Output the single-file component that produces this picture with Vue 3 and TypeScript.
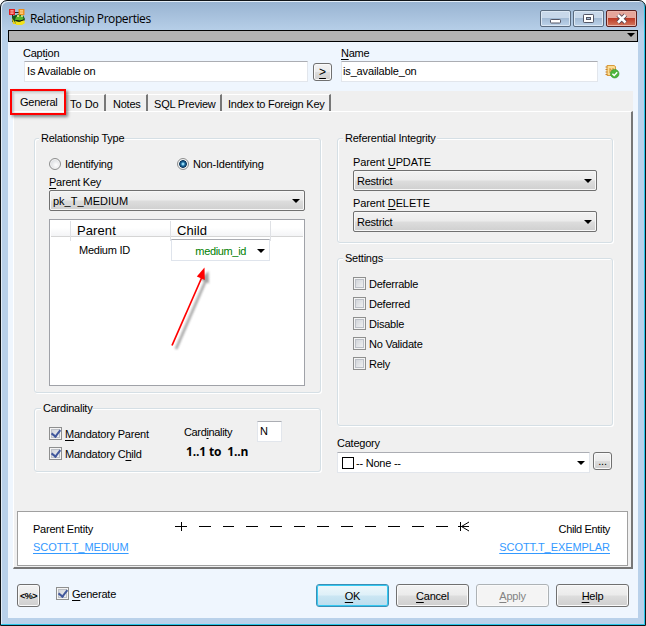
<script setup lang="ts">
import { ref } from 'vue'

interface Option {
  label: string
  checked: boolean
}

const tabs: { name: string; cls: string }[] = [
  { name: 'To Do', cls: 'todo' },
  { name: 'Notes', cls: 'notes' },
  { name: 'SQL Preview', cls: 'sql' },
  { name: 'Index to Foreign Key', cls: 'fk' },
]

const rules = [
  { key: 'U', rest: 'PDATE', value: 'Restrict' },
  { key: 'D', rest: 'ELETE', value: 'Restrict' },
]

const settings = ref<Option[]>([
  { label: 'Deferrable', checked: false },
  { label: 'Deferred', checked: false },
  { label: 'Disable', checked: false },
  { label: 'No Validate', checked: false },
  { label: 'Rely', checked: false },
])

const actions = [
  { key: 'O', rest: 'K', cls: 'primary' },
  { key: 'C', rest: 'ancel', cls: '' },
  { key: 'A', rest: 'pply', cls: 'off' },
  { key: 'H', rest: 'elp', cls: '' },
]

const dashes = [200, 223.5, 247, 271, 294.5, 318, 342, 365.5, 389, 413, 437]
</script>

<template>
  <div class="window">
    <header class="titlebar">
      <svg class="app-icon" width="17" height="17" viewBox="0 0 17 17">
        <path d="M3.500 5v8M6 3.500h4" stroke="#222" fill="none" />
        <path d="M3 7l4-1 3-1 4 1 2 4-2 5H5l-2-3z" fill="#14571b" />
        <path d="M7 8l3-2 4 2 1 3-4 1-5-1z" fill="#56b42c" />
        <path d="M6 12l4 1 5-2 1 3-3 2H7z" fill="#f2e21c" />
        <path d="M3 9l2 3 2 3H4z" fill="#e9cf20" />
        <circle cx="9" cy="7" r="1" fill="#fff59a" /><circle cx="13" cy="7" r="1" fill="#fff59a" />
        <path d="M7 11.500q4 1.500 8-.8" stroke="#111" fill="none" />
        <rect x=".7" y=".7" width="4.600" height="4.600" fill="#ffd9d0" stroke="#e01818" stroke-width="1.300" />
        <path d="M1 3h4" stroke="#e01818" />
        <rect x="10.200" y=".7" width="4.600" height="4.600" fill="#ffe9b0" stroke="#f08a10" stroke-width="1.300" />
        <path d="M10 3h5" stroke="#f08a10" />
      </svg>
      <span class="title">Relationship Properties</span>
      <div class="win-buttons">
        <button class="wb"><svg width="29" height="16" viewBox="0 0 29 16"><rect x="9.500" y="8.500" width="10" height="3.500" rx=".7" fill="#fff" stroke="#535666" /></svg></button>
        <button class="wb"><svg width="29" height="16" viewBox="0 0 29 16"><rect x="9.500" y="3.500" width="10" height="8" rx=".7" fill="#fff" stroke="#535666" /><rect x="12.500" y="6.500" width="4" height="2" fill="#a6bcd5" stroke="#535666" /></svg></button>
        <button class="wb close"><svg width="29" height="16" viewBox="0 0 29 16"><path d="M11 4l7.500 7.500M18.500 4L11 11.500" stroke="#554450" stroke-width="4.400" /><path d="M11 4l7.500 7.500M18.500 4L11 11.500" stroke="#fff" stroke-width="2.500" /></svg></button>
      </div>
    </header>

    <main class="client">
      <div class="strip"><i class="tri"></i></div>

      <section class="names">
        <div class="field caption">
          <label>Capt<u>i</u>on</label>
          <div class="input">Is Available on</div>
        </div>
        <button class="btn more"><u>&gt;</u></button>
        <div class="field name">
          <label><u>N</u>ame</label>
          <div class="input ident">is_available_on</div>
        </div>
        <svg class="script-icon" width="15" height="15" viewBox="0 0 15 15">
          <path d="M2 1.500h7l1.500 1v9H2z" fill="#fbdc91" stroke="#d99b3c" />
          <path d="M.5 3h2M.5 5.500h2M.5 8h2M.5 10.500h2" stroke="#c9852e" />
          <path d="M5 9V4.500L8 8V4" stroke="#c98b35" fill="none" />
          <circle cx="9.700" cy="9.700" r="4.300" fill="#4cb53c" stroke="#35932c" stroke-width=".6" />
          <path d="M7.400 9.800l1.800 1.700 3-3.300" stroke="#fff" stroke-width="1.500" fill="none" />
        </svg>
      </section>

      <nav class="tabs">
        <div class="tab general"><span>General</span></div>
        <div v-for="t in tabs" :key="t.name" class="tab" :class="t.cls"><span>{{ t.name }}</span></div>
      </nav>

      <section class="page">
        <div class="columns">
          <div class="left">
            <fieldset class="group rel">
              <div class="legend"><span>Relationship Type</span></div>
              <div class="radios">
                <label class="check"><i class="radio"></i><span>Identifying</span></label>
                <label class="check"><i class="radio on"></i><span>Non-Identifying</span></label>
              </div>
              <div class="lab"><u>P</u>arent Key</div>
              <div class="select"><span class="caps">pk_T_MEDIUM</span><i class="tri"></i></div>
              <div class="grid">
                <div class="thead"><b></b><b>Parent</b><b>Child</b><b></b></div>
                <div class="trow">
                  <span class="pcol">Medium ID</span>
                  <div class="ccol"><span>medium_id</span><i class="tri"></i></div>
                </div>
              </div>
            </fieldset>
            <fieldset class="group card">
              <div class="legend"><span>Cardinality</span></div>
              <div class="card-body">
                <div class="checks">
                  <label class="check"><i class="box on"></i><span><u>M</u>andatory Parent</span></label>
                  <label class="check"><i class="box on"></i><span>Mandatory C<u>h</u>ild</span></label>
                </div>
                <div class="card-info">
                  <div class="card-row"><span>Card<u>i</u>nality</span><div class="input n">N</div></div>
                  <strong>1..1 to&nbsp; 1..n</strong>
                </div>
              </div>
            </fieldset>
          </div>

          <div class="right">
            <fieldset class="group ref">
              <div class="legend"><span>Referential Integrity</span></div>
              <div v-for="r in rules" :key="r.key" class="rule">
                <div class="lab">Parent <u>{{ r.key }}</u>{{ r.rest }}</div>
                <div class="select"><span>{{ r.value }}</span><i class="tri"></i></div>
              </div>
            </fieldset>
            <fieldset class="group set">
              <div class="legend"><span>Settings</span></div>
              <div class="checks">
                <label v-for="s in settings" :key="s.label" class="check" @click="s.checked = !s.checked">
                  <i class="box" :class="{ on: s.checked }"></i><span>{{ s.label }}</span>
                </label>
              </div>
            </fieldset>
            <div class="lab cat">Category</div>
            <div class="cat-row">
              <div class="combo"><i class="swatch"></i><span>-- None --</span><i class="tri"></i></div>
              <button class="btn dots">...</button>
            </div>
          </div>
        </div>

        <div class="entities">
          <div class="entity">
            <span>Parent Entity</span>
            <a>SCOTT.T_MEDIUM</a>
          </div>
          <svg class="link-line" width="300" height="14" viewBox="174 519 300 14" shape-rendering="crispEdges">
            <path d="M176 526.500h12M182.500 522v9" stroke="#000" fill="none" />
            <path v-for="d in dashes" :key="d" :d="`M${d} 526.500h11.500`" stroke="#000" />
            <path d="M459 526.500h11M461.500 522v9" stroke="#000" fill="none" />
            <path d="M470 522l-7.500 4.500L470 531" stroke="#000" fill="none" shape-rendering="auto" />
          </svg>
          <div class="entity child">
            <span>Child Entity</span>
            <a>SCOTT.T_EXEMPLAR</a>
          </div>
        </div>
      </section>

      <footer class="footer">
        <button class="btn code">&lt;%&gt;</button>
        <label class="check gen"><i class="box on"></i><span><u>G</u>enerate</span></label>
        <div class="actions">
          <button v-for="a in actions" :key="a.key" class="btn action" :class="a.cls"><span><u>{{ a.key }}</u>{{ a.rest }}</span></button>
        </div>
      </footer>
    </main>

    <div class="callout"></div>
    <svg class="arrow" width="50" height="90" viewBox="165 262 50 90">
      <defs>
        <filter id="soft" x="-30%" y="-30%" width="160%" height="160%"><feGaussianBlur stdDeviation="1.300" /></filter>
      </defs>
      <g transform="translate(4 3)" opacity=".45" filter="url(#soft)">
        <path d="M172 346L202 277" stroke="#333" stroke-width="2.500" />
        <path d="M204.500 268l-8 8.500 8.500 4z" fill="#333" />
      </g>
      <path d="M172 345.500L202 277" stroke="#f00" stroke-width="1.700" />
      <path d="M204.500 267.500l-7.700 9 8 3.500z" fill="#f00" />
    </svg>
  </div>
</template>

<style>
body {
  margin: 0;
  overflow: hidden;
}
</style>

<style scoped>
* {
  box-sizing: border-box;
}
.window {
  position: relative;
  width: 646px;
  height: 626px;
  padding: 1px 7px 7px 7px;
  border: 1px solid #101418;
  border-radius: 7px 7px 0 0;
  background: linear-gradient(#98b3d1 0, #b9d1ea 32px, #b9d1ea 110px, #b9d1ea);
  box-shadow: inset -1px -1px 0 #27c5e8, inset 1px 1px 0 #e3edf7;
  font-family: 'Liberation Sans', Arial, sans-serif;
  font-size: 11px;
  letter-spacing: -0.23px;
  line-height: 14px;
  color: #000;
}
u {
  text-decoration: underline;
  text-underline-offset: 2px;
  text-decoration-thickness: 1px;
}
button {
  padding: 0;
  font: inherit;
  letter-spacing: inherit;
}
i {
  flex: none;
  display: block;
}
.caps {
  letter-spacing: 0;
}
.titlebar {
  display: flex;
  height: 28px;
  padding: 0 1px 0 1px;
}
.app-icon {
  margin-top: 7px;
}
.title {
  margin: 10px 0 0 4px;
  font-family: 'Open Sans', 'Noto Sans', sans-serif;
  font-size: 12px;
  letter-spacing: -0.42px;
}
.win-buttons {
  display: flex;
  gap: 2px;
  margin: 8px 0 0 auto;
}
.wb {
  width: 31px;
  height: 17px;
  border: 1px solid #5a6b7f;
  border-radius: 2px;
  background: linear-gradient(#c8d8ea 0 45%, #a3bbd5 50%, #bdd3ea);
  box-shadow: inset 0 0 0 1px #dce8f4;
}
.wb svg {
  display: block;
}
.close {
  border-color: #5b2020;
  background: linear-gradient(#e5a69b 0 45%, #bd3a25 50%, #d37960);
  box-shadow: inset 0 0 0 1px #eab5aa;
}
.client {
  display: flex;
  flex-direction: column;
  height: 588px;
  width: 630px;
  background: #eff6fe;
}
.strip {
  display: flex;
  justify-content: flex-end;
  height: 12px;
  padding: 2px 2px;
  border: 1px solid #000;
  background: #b2b2b2;
}
.tri {
  width: 0;
  height: 0;
  border: 4px solid transparent;
  border-top-color: #000;
  border-bottom: 0;
}
.names {
  display: flex;
  height: 49px;
  padding: 4px 0 0 16px;
}
.field label {
  display: block;
  height: 15px;
}
.caption {
  width: 284px;
}
.caption label {
  margin-left: -1px;
}
.name {
  width: 257px;
  margin-left: 9px;
}
.input {
  height: 21px;
  padding: 2px 2px;
  border: 1px solid #e2e6ec;
  border-top-color: #abadb3;
  background: #fff;
}
.ident {
  padding-left: 1px;
  letter-spacing: -0.15px;
}
.caption .input {
  letter-spacing: -0.15px;
}
.btn {
  border: 1px solid #707070;
  border-radius: 3px;
  background: linear-gradient(#f3f3f3 0, #ebebeb 48%, #dddddd 52%, #cfcfcf);
  box-shadow: inset 0 0 0 1px #fafafa;
  color: #000;
}
.more {
  width: 19px;
  height: 18px;
  margin: 17px 0 0 5px;
  font-size: 12px;
}
.script-icon {
  margin: 18px 0 0 7px;
}
.tabs {
  display: flex;
  width: 619px;
  height: 20px;
  margin-left: 6px;
  padding-top: 3px;
  background: #efefef;
}
.tab {
  height: 17px;
  padding-top: 2px;
  border-top: 1px solid #fff;
  border-right: 2px solid #777;
  white-space: nowrap;
}
.tab span {
  display: block;
}
.general {
  width: 52px;
  height: 20px;
  margin-top: -2px;
  padding: 2px 0 0 6px;
  border-right: 0;
}
.todo { width: 40px; padding-left: 4px; letter-spacing: 0; }
.notes { width: 42px; padding-left: 7px; }
.sql { width: 74px; padding-left: 6px; letter-spacing: -0.2px; }
.fk { width: 109px; padding-left: 6px; letter-spacing: -0.25px; }
.page {
  width: 620px;
  height: 458px;
  margin-left: 5px;
  padding: 0 3px;
  border: 1px solid #fff;
  border-right: 2px solid #777;
  border-bottom: 2px solid #777;
  background: #f0f0f0;
}
.columns {
  display: flex;
  gap: 16px;
  height: 399px;
  padding: 26px 0 0 17px;
}
.left {
  width: 287px;
}
.right {
  width: 276px;
}
.group {
  min-width: 0;
  margin: 0;
  padding: 0 15px;
  border: 1px solid #d5dfe5;
  border-radius: 3px;
  box-shadow: inset 1px 1px 0 #fff, 1px 1px 0 #fff;
}
.left .group {
  padding: 0 14px;
}
.legend {
  height: 14px;
  margin: -8px 0 0 -10px;
}
.legend span {
  display: inline-block;
  padding: 0 1px 0 2px;
  background: #f0f0f0;
}
.rel {
  height: 255px;
}
.radios {
  display: flex;
  padding-top: 12px;
}
.radios .check {
  width: 128px;
}
.check {
  display: flex;
  align-items: center;
  gap: 4px;
  height: 14px;
  white-space: nowrap;
}
.radio {
  width: 12px;
  height: 12px;
  border: 1px solid #8e8f8f;
  border-radius: 50%;
  background: radial-gradient(circle at 60% 60%, #fff, #c9cdd2);
  box-shadow: inset 0 0 0 1px #f4f4f4;
}
.radio.on {
  background: radial-gradient(circle at 50% 50%, #9ce3fa 0 0.600px, #1c6aa0 2px, #0b3558 3.600px, #e9edf0 4.300px);
}
.lab {
  height: 14px;
}
.rel .lab {
  margin-top: 4px;
}
.select {
  display: flex;
  align-items: center;
  justify-content: space-between;
  height: 21px;
  padding: 1px 4px 0 3px;
  border: 1px solid #707070;
  border-radius: 2px;
  background: linear-gradient(#f2f2f2 0, #ebebeb 48%, #dddddd 52%, #cfcfcf);
  box-shadow: inset 0 0 0 1px #f7f7f7;
}
.rel .select {
  width: 256px;
  margin-top: 1px;
}
.grid {
  width: 256px;
  height: 167px;
  margin-top: 8px;
  padding: 1px;
  border: 1px solid #a0a2a8;
  background: #fff;
}
.thead {
  display: grid;
  grid-template-columns: 20px 100px 100px 1fr;
  height: 16px;
  border-bottom: 1px solid #d5d5d5;
  background: linear-gradient(#fff 45%, #f3f4f6);
}
.thead b {
  padding-left: 6px;
  border-right: 1px solid #dfe1e5;
  font-weight: 400;
  font-size: 13px;
  letter-spacing: 0.1px;
  line-height: 20px;
}
.thead b:last-child {
  border: 0;
}
.trow {
  display: flex;
  padding-top: 2px;
}
.pcol {
  width: 120px;
  padding: 4px 0 0 28px;
  letter-spacing: -0.25px;
}
.ccol {
  display: flex;
  align-items: center;
  justify-content: flex-end;
  gap: 11px;
  width: 99px;
  height: 22px;
  padding: 1px 4px 0 0;
  border: 1px solid #dfe4ec;
  border-top-color: #abadb3;
  color: #008000;
  letter-spacing: -0.35px;
}
.card {
  height: 64px;
  margin-top: 15px;
}
.card .legend {
  margin-left: -8px;
}
.card-body {
  display: flex;
}
.checks {
  display: grid;
  gap: 6px;
}
.card .checks {
  width: 135px;
  padding-top: 12px;
  align-content: start;
}
.box {
  width: 13px;
  height: 13px;
  border: 1px solid #8e8f8f;
  background: linear-gradient(135deg, #cbcfd5, #f6f6f6);
  box-shadow: inset 0 0 0 1px #f4f4f4, inset 0 0 0 2px #bcc0c7;
}
.check .box {
  margin: -1px -1px 0 0;
}
.box.on::after {
  content: '';
  display: block;
  width: 4px;
  height: 7px;
  margin: 0 0 0 3px;
  border: solid #42589c;
  border-width: 0 2px 2px 0;
  transform: rotate(38deg);
}
.card-row {
  display: flex;
  height: 21px;
  margin-top: 6px;
}
.card-row > span {
  width: 73px;
  padding-top: 4px;
  letter-spacing: -0.35px;
}
.n {
  width: 25px;
  height: 21px;
}
.card-info strong {
  display: block;
  margin: 3px 0 0 2px;
  font-family: 'Open Sans', sans-serif;
  font-size: 12px;
  letter-spacing: -0.15px;
}
.ref {
  height: 105px;
  padding-top: 0;
}
.ref .legend,
.set .legend {
  margin-left: -10px;
}
.rule {
  padding-top: 5px;
}
.legend + .rule {
  padding-top: 10px;
}
.rule .lab {
  letter-spacing: -0.1px;
}
.rule .select {
  width: 244px;
  margin-top: 1px;
}
.set {
  height: 168px;
  margin-top: 15px;
}
.set .checks {
  padding-top: 12px;
}
.cat {
  margin: 10px 0 0;
}
.cat-row {
  display: flex;
  gap: 3px;
  padding-top: 2px;
}
.combo {
  display: flex;
  align-items: center;
  width: 253px;
  height: 21px;
  padding: 1px 4px 0;
  border: 1px solid #e2e6ec;
  border-top-color: #abadb3;
  background: #fff;
}
.combo .tri {
  margin-left: auto;
}
.swatch {
  width: 12px;
  height: 12px;
  margin: -1px 2px 0 0;
  border: 1px solid #000;
}
.dots {
  width: 19px;
  height: 18px;
  line-height: 12px;
}
.entities {
  display: flex;
  width: 611px;
  height: 55px;
  padding: 0 17px 0 15px;
  border: 1px solid #a0a0a0;
  background: #fff;
}
.entity {
  display: flex;
  flex-direction: column;
  gap: 4px;
  width: 139px;
  padding-top: 10px;
}
.child {
  align-items: flex-end;
  margin-left: auto;
  letter-spacing: -0.35px;
}
.entity a {
  color: #3399ff;
  letter-spacing: -0.07px;
  text-decoration: underline;
  text-underline-offset: 2px;
}
.link-line {
  flex: none;
  margin: 7px 0 0 3px;
}
.footer {
  display: flex;
  padding: 15px 9px 0;
}
.code {
  width: 23px;
  height: 23px;
  font-size: 9px;
  font-weight: 700;
  letter-spacing: -0.5px;
}
.gen {
  margin: 3px 0 0 16px;
}
.actions {
  display: flex;
  gap: 7px;
  margin-left: auto;
}
.action {
  width: 73px;
  height: 23px;
  padding-top: 1px;
}
.primary {
  border-color: #3c8fb5;
  background: linear-gradient(#eef7fb 0, #def0f8 48%, #cbe6f3 52%, #bbddee);
  box-shadow: inset 0 0 0 1px #35c9f2;
}
.off {
  border-color: #adb2b5;
  background: #f4f4f4;
  color: #838383;
}
.callout {
  position: absolute;
  left: 9px;
  top: 88px;
  width: 56px;
  height: 26px;
  border: 2px solid #f00;
  box-shadow: 2px 2px 3px rgba(0, 0, 0, 0.45), inset 2px 2px 2px rgba(0, 0, 0, 0.2);
}
.arrow {
  position: absolute;
  left: 164px;
  top: 261px;
}
</style>
